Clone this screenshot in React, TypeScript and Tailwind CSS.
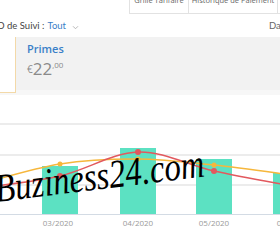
type Pt = [number, number];

function smooth(pts: Pt[]) {
  let d = `M${pts[0][0]},${pts[0][1]}`;
  for (let i = 0; i < pts.length - 1; i++) {
    const p0 = pts[i - 1] || pts[i];
    const p1 = pts[i];
    const p2 = pts[i + 1];
    const p3 = pts[i + 2] || p2;
    const c1x = p1[0] + (p2[0] - p0[0]) / 6;
    const c1y = p1[1] + (p2[1] - p0[1]) / 6;
    const c2x = p2[0] - (p3[0] - p1[0]) / 6;
    const c2y = p2[1] - (p3[1] - p1[1]) / 6;
    d += ` C${c1x},${c1y} ${c2x},${c2y} ${p2[0]},${p2[1]}`;
  }
  return d;
}

const bars = [
  { x: -36, top: 92 },
  { x: 42, top: 66 },
  { x: 120, top: 48 },
  { x: 196, top: 59 },
  { x: 273, top: 73 },
];

const red: Pt[] = [[-20, 88], [60, 76], [138, 52], [214, 71], [292, 86]];
const orange: Pt[] = [[-20, 84], [60, 64], [138, 59], [214, 65], [292, 75]];

function Chart() {
  return (
    <svg width="280" height="145" viewBox="0 0 280 145" className="block">
      {[24, 55, 85].map((y) => (
        <line key={y} x1="0" x2="280" y1={y} y2={y} stroke="#e6e6e6" strokeWidth="1.5" />
      ))}
      {bars.map((b) => (
        <rect key={b.x} x={b.x} y={b.top} width="36" height={114 - b.top} fill="#5ce1c2" />
      ))}
      <line x1="0" x2="280" y1="114.5" y2="114.5" stroke="#d3dbe4" strokeWidth="1" />
      <path d={smooth(orange)} fill="none" stroke="#f6b73c" strokeWidth="1.5" />
      <path d={smooth(red)} fill="none" stroke="#e2595e" strokeWidth="1.5" />
      {orange.map(([x, y]) => (
        <circle key={`o${x}`} cx={x} cy={y} r="2.5" fill="#f6b73c" />
      ))}
      {red.map(([x, y]) => (
        <circle key={`r${x}`} cx={x} cy={y} r="3" fill="#e2595e" />
      ))}
      {[
        [58, "03/2020"],
        [138, "04/2020"],
        [214, "05/2020"],
        [292, "06/2020"],
      ].map(([x, t]) => (
        <text
          key={t as string}
          x={x as number}
          y="126"
          textAnchor="middle"
          fontSize="8"
          fill="#9a9a9a"
          fontFamily="'Open Sans', sans-serif"
        >
          {t}
        </text>
      ))}
    </svg>
  );
}

export default function App() {
  return (
    <div className="relative w-[280px] h-[245px] overflow-hidden bg-white font-['Open_Sans',sans-serif]">
      <div className="h-[15px] flex overflow-hidden">
        <div className="ml-[129px] flex border-l border-b border-[#e2e2e2] h-[24px] -mt-[10px] shrink-0">
          <div className="w-[59px] shrink-0 text-[7.5px] leading-[10px] pt-[5px] text-[#666] whitespace-nowrap border-r border-[#e2e2e2] text-center">
            Grille Tarifaire
          </div>
          <div className="w-[89px] shrink-0 text-[7.5px] leading-[10px] pt-[5px] text-[#666] whitespace-nowrap border-r border-[#e2e2e2] text-center">
            Historique de Paiement
          </div>
          <div className="w-[40px] shrink-0" />
        </div>
      </div>

      <div className="flex items-center h-[22px] text-[9.5px] text-[#444] whitespace-nowrap overflow-hidden font-['Lato',sans-serif]">
        <div className="-ml-[3px] flex items-center shrink-0">
          <span>O de Suivi :</span>
          <span className="text-[#3a80c8] ml-[3px]">Tout</span>
          <svg width="7" height="5" viewBox="0 0 8 6" className="ml-[6px] mt-[2px]">
            <path d="M1 1.5 L4 4.5 L7 1.5" fill="none" stroke="#aaa" strokeWidth="1" />
          </svg>
        </div>
        <span className="ml-auto text-[#666] w-[11px] overflow-hidden shrink-0">Dashboard</span>
      </div>

      <div className="flex h-[58px] border-b-[5px] border-[#f7f7f7]">
        <div className="w-[16px] shrink-0 border-r border-b border-[#f3d9a8] bg-white -mb-[3px]" />
        <div className="flex-1 bg-[#f2f2f2] pl-[11px] pt-[5px]">
          <div className="text-[11px] font-semibold text-[#3a80c8] leading-[14px]">Primes</div>
          <div className="flex items-start text-[#8a8a8a] mt-[3px]">
            <span className="text-[10px] leading-[12px] mt-[4px]">€</span>
            <span className="text-[17px] leading-[20px]">22</span>
            <span className="text-[8px] leading-[10px] mt-[1px]">,00</span>
          </div>
        </div>
      </div>

      <div className="mt-[5px]">
        <Chart />
      </div>

      <div className="absolute left-[-5px] top-[169px] -rotate-[7deg] scale-x-[0.82] origin-left text-[40px] italic text-black whitespace-nowrap font-['Liberation_Serif',serif] leading-none pointer-events-none">
        Buziness24.com
      </div>
    </div>
  );
}
